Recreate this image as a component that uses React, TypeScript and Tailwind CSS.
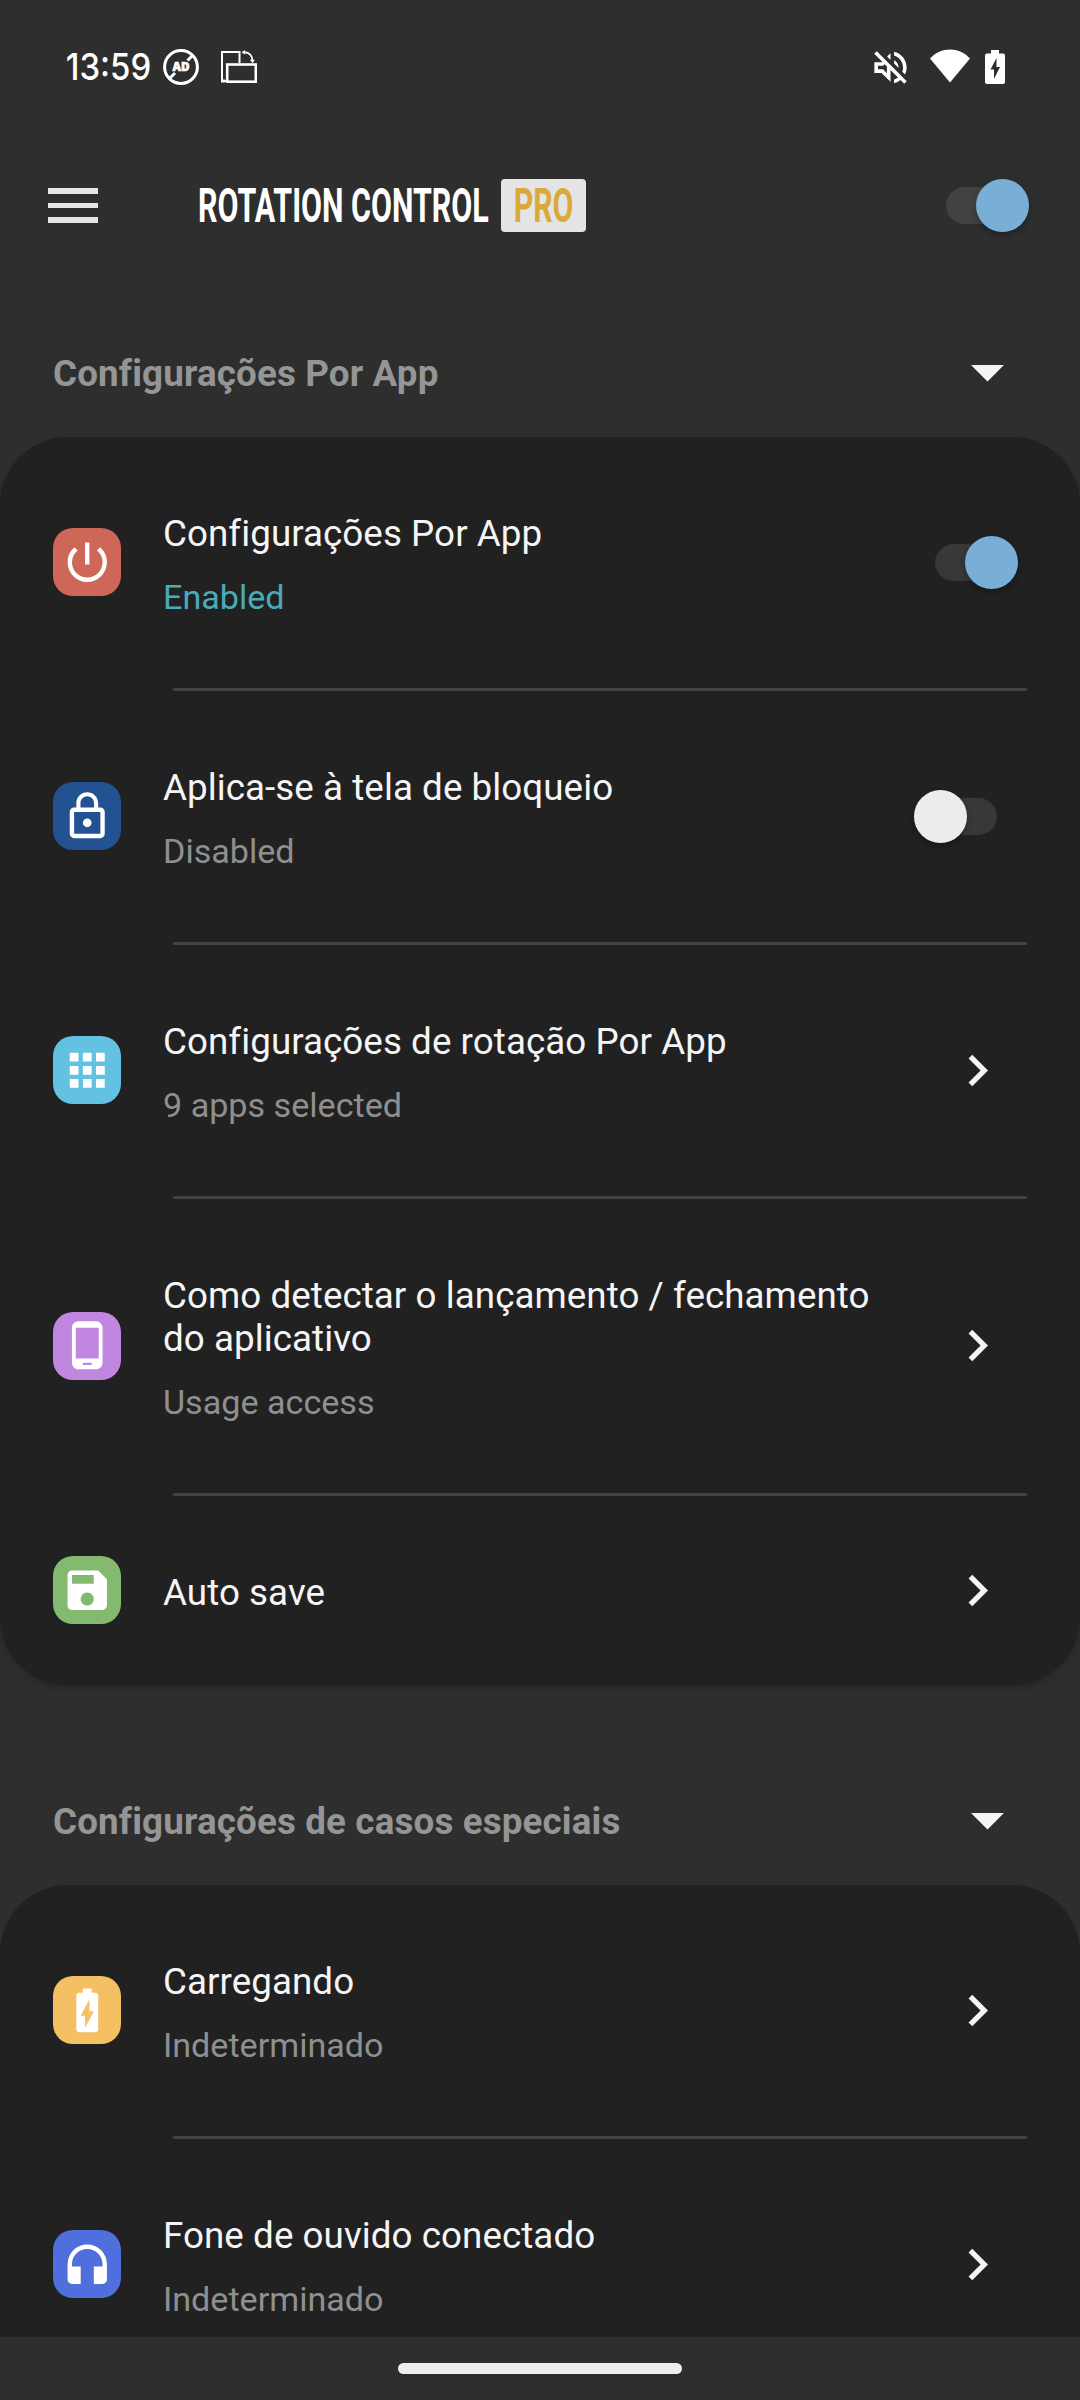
import React from 'react';
import {
  MdApps,
  MdArrowDropDown,
  MdBatteryChargingFull,
  MdChevronRight,
  MdHeadphones,
  MdLockOutline,
  MdOutlineVolumeOff,
  MdPhoneAndroid,
  MdPowerSettingsNew,
  MdSave,
} from 'react-icons/md';

function Toggle({ on, track = 'bg-[#383838]' }: { on: boolean; track?: string }) {
  return (
    <div className={`relative w-[83px] h-[37px] flex items-center ${on ? 'justify-end' : 'justify-start'}`}>
      <div className={`absolute inset-y-0 rounded-full ${track} ${on ? 'left-0 right-2' : 'left-2 right-0'}`} />
      <div
        className={`relative w-[53px] h-[53px] shrink-0 rounded-full shadow-[0_3px_6px_rgba(0,0,0,0.3)] ${
          on ? 'bg-[#79afd6]' : 'bg-[#ececec]'
        }`}
      />
    </div>
  );
}

function StatusBar() {
  return (
    <div className="h-[134px] flex items-center justify-between pl-[64px] pr-[75px] text-white">
      <div className="flex items-center">
        <svg width="90" height="52" viewBox="0 0 90 52">
          <text
            transform="scale(0.89 1)"
            x="2"
            y="39"
            textLength="96"
            lengthAdjust="spacingAndGlyphs"
            fill="#fff"
            className="font-['Inter',sans-serif] font-medium text-[36.500px]"
          >
            13:59
          </text>
        </svg>
        <svg className="ml-[9px]" width="36" height="36" viewBox="0 0 36 36" fill="none" stroke="#fff" strokeWidth="3">
          <circle cx="18" cy="18" r="16.4" />
          <path d="M29.500 6.500l-5 5M12 24l-5.500 5.500" />
          <text x="9.5" y="22.300" textLength="17" lengthAdjust="spacingAndGlyphs" fill="#fff" stroke="#fff" strokeWidth="0.6" className="font-['Open_Sans',sans-serif] font-extrabold text-[12px]">
            AD
          </text>
        </svg>
        <svg className="ml-[22px]" width="36" height="34" viewBox="0 0 36 34" fill="none" stroke="#fff">
          <path d="M18.5 13V2H1V31H5" strokeWidth="2" />
          <path d="M0 31h4" strokeWidth="3" />
          <rect x="6.200" y="14.500" width="28.600" height="17.200" strokeWidth="2.600" />
          <path d="M23 2.3c5.500 0 8.500 4 8.500 9" strokeWidth="2" />
          <path d="M20.500 2.300l3.500-2.300v4.600zM31.500 13l-2.700-3.200h5.200z" fill="#fff" stroke="none" />
        </svg>
      </div>
      <div className="flex items-center">
        <MdOutlineVolumeOff size={43} />
        <svg className="ml-[18px] mt-[-3px]" width="40" height="34" viewBox="0 0 40 34">
          <path d="M0 9.500C5.500 3.500 12.500 0.500 20 0.500S34.500 3.500 40 9.500L20 33.500z" fill="#fff" />
        </svg>
        <svg className="ml-[15px]" width="20" height="34" viewBox="0 0 20 34">
          <path
            fillRule="evenodd"
            d="M6 0h8v3.500h4a2 2 0 0 1 2 2V32a2 2 0 0 1-2 2H2a2 2 0 0 1-2-2V5.500a2 2 0 0 1 2-2h4zM11.500 8L5.500 19.500h3.500v9.500l6-12h-3.500z"
            fill="#fff"
          />
        </svg>
      </div>
    </div>
  );
}

function AppBar() {
  return (
    <header className="h-[143px] flex items-center pl-[48px] pr-[51px]">
      <div className="w-[50px] flex flex-col gap-[8.500px]">
        <span className="h-[5.700px] bg-[#e6e6e6]" />
        <span className="h-[5.700px] bg-[#e6e6e6]" />
        <span className="h-[5.700px] bg-[#e6e6e6]" />
      </div>
      <svg className="ml-[100px]" width="292" height="64" viewBox="0 0 292 64">
        <text
          transform="scale(0.624 1)"
          x="0"
          y="48.500"
          textLength="466"
          lengthAdjust="spacingAndGlyphs"
          fill="#fff"
          className="font-['Roboto',sans-serif] font-bold text-[48px]"
        >
          ROTATION CONTROL
        </text>
      </svg>
      <div className="ml-[11px] w-[85px] h-[53px] rounded-[4px] bg-[#e4e4e4] flex items-center justify-center">
        <svg className="shrink-0" width="62" height="64" viewBox="0 0 62 64">
          <text
            transform="scale(0.636 1)"
            x="1"
            y="48.500"
            textLength="94"
            lengthAdjust="spacingAndGlyphs"
            fill="#dba93a"
            className="font-['Roboto',sans-serif] font-bold text-[48px]"
          >
            PRO
          </text>
        </svg>
      </div>
      <div className="ml-auto">
        <Toggle on track="bg-[#424242]" />
      </div>
    </header>
  );
}

function SectionHeader({ title }: { title: string }) {
  return (
    <div className="h-[160px] pt-[33px] pl-[53px] pr-[53px] flex items-center justify-between">
      <h2 className="text-[36.750px] leading-[43px] tracking-[0.15px] font-bold text-[#959595]">{title}</h2>
      <MdArrowDropDown size={79} className="text-[#f5f5f5] mt-[-5px]" />
    </div>
  );
}

type RowProps = {
  icon: React.ReactNode;
  tile: string;
  title: string;
  sub?: string;
  subColor?: string;
  right?: React.ReactNode;
  height?: string;
};

function Row({ icon, tile, title, sub, subColor = 'text-[#8f8f8f]', right, height = 'h-[251px]' }: RowProps) {
  return (
    <div className={`${height} pl-[53px] flex items-center`}>
      <div className={`w-[68px] h-[68px] mb-px rounded-[20px] shrink-0 flex items-center justify-center text-white text-[52.500px] ${tile}`}>
        {icon}
      </div>
      <div className="ml-[42px] w-[720px] pt-[3px]">
        <div className="text-[36.750px] leading-[43px] tracking-[0.06px] text-[#f5f5f5]">{title}</div>
        {sub && <div className={`mt-[22px] text-[34.125px] leading-[40px] ${subColor}`}>{sub}</div>}
      </div>
      <div className="ml-auto">
        {right ?? <MdChevronRight size={63} className="text-[#f5f5f5] mr-[71px] mb-px" />}
      </div>
    </div>
  );
}

function Divider() {
  return <div className="h-[3px] ml-[173px] mr-[53px] bg-[#424242]" />;
}

export default function App() {
  return (
    <div className="w-[1080px] h-[2400px] overflow-hidden bg-[#2e2e2e] flex flex-col font-['Roboto',sans-serif]">
      <StatusBar />
      <AppBar />

      <main className="flex-1 min-h-0 overflow-hidden">
        <SectionHeader title="Configurações Por App" />
        <section className="rounded-[68px] bg-[#212121] shadow-[0_3px_6px_rgba(0,0,0,0.2)]">
          <Row
            icon={<MdPowerSettingsNew />}
            tile="bg-[#cf6759]"
            title="Configurações Por App"
            sub="Enabled"
            subColor="text-[#4baab8]"
            right={<div className="mr-[62px]"><Toggle on /></div>}
          />
          <Divider />
          <Row
            icon={<MdLockOutline />}
            tile="bg-[#225291]"
            title="Aplica-se à tela de bloqueio"
            sub="Disabled"
            right={<div className="mr-[83px]"><Toggle on={false} /></div>}
          />
          <Divider />
          <Row icon={<MdApps />} tile="bg-[#63c1e1]" title="Configurações de rotação Por App" sub="9 apps selected" />
          <Divider />
          <Row
            icon={<MdPhoneAndroid />}
            tile="bg-[#c186e0]"
            title="Como detectar o lançamento / fechamento do aplicativo"
            sub="Usage access"
            height="h-[294px]"
          />
          <Divider />
          <Row icon={<MdSave />} tile="bg-[#84ba70]" title="Auto save" height="h-[189px]" />
        </section>

        <div className="h-[40px]" />
        <SectionHeader title="Configurações de casos especiais" />
        <section className="rounded-t-[68px] bg-[#212121]">
          <Row icon={<MdBatteryChargingFull />} tile="bg-[#f3c064]" title="Carregando" sub="Indeterminado" />
          <Divider />
          <Row icon={<MdHeadphones />} tile="bg-[#4f70dc]" title="Fone de ouvido conectado" sub="Indeterminado" />
        </section>
      </main>

      {/* gesture bar */}
      <div className="h-[63px] shrink-0 bg-[#2e2e2e] flex items-center justify-center">
        <div className="w-[284px] h-[11px] rounded-full bg-[#eeeeee]" />
      </div>
    </div>
  );
}
